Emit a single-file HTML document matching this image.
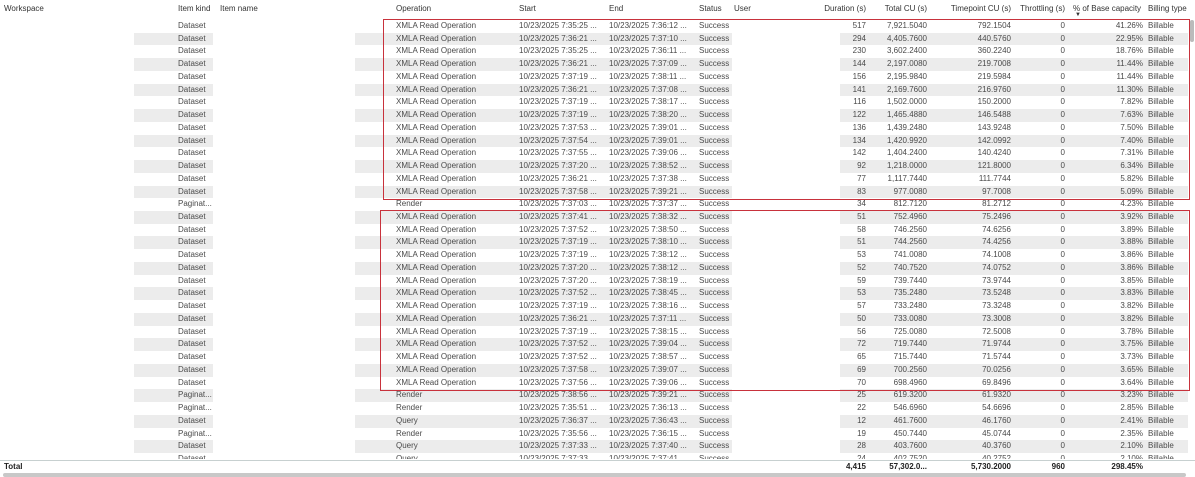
<!DOCTYPE html>
<html><head><meta charset="utf-8"><style>
body{margin:0;width:1195px;height:477px;overflow:hidden;background:#fff;font-family:"Liberation Sans",sans-serif;font-size:8px;color:#4a4a4a;position:relative}
.h{position:absolute;top:0;height:18px;line-height:18px;width:1195px;color:#333}
.h span,.r span{position:absolute;white-space:nowrap}
#body{position:absolute;top:20px;left:0;width:1195px;height:439px;overflow:hidden}
.r{position:relative;height:12.74px;line-height:12.74px}
.r.g:before{content:"";position:absolute;left:134px;width:79px;top:0;bottom:0;background:#ececec}
.r.g:after{content:"";position:absolute;left:355px;width:377px;top:0;bottom:0;background:#ececec;z-index:0}
.r.g i{position:absolute;left:840px;width:348px;top:0;bottom:0;background:#ececec}
.r span{z-index:1}
.k{left:178px}.op{left:396px}.s{left:519px}.e{left:609px}.st{left:699px}
.d{right:329px}.t{right:268px}.tp{right:184px}.th{right:130px}.p{right:52px}.b{left:1148px}
.box{position:absolute;border-width:1px;border-style:solid;border-color:#c8323c !important;z-index:5}
.tot{position:absolute;top:460px;left:0;width:1195px;height:12px;line-height:12px;border-top:1px solid #c7d0d0;font-weight:bold;color:#222}
.tot span{position:absolute}
</style></head><body>
<div class="h"><span style="left:4px">Workspace</span><span style="left:178px">Item kind</span><span style="left:220px">Item name</span><span style="left:396px">Operation</span><span style="left:519px">Start</span><span style="left:609px">End</span><span style="left:699px">Status</span><span style="left:734px">User</span><span style="right:329px">Duration (s)</span><span style="right:268px">Total CU (s)</span><span style="right:184px">Timepoint CU (s)</span><span style="right:130px">Throttling (s)</span><span style="left:1073px">% of Base capacity</span><span style="left:1075px;top:6px;font-size:6px">▼</span><span style="left:1148px">Billing type</span></div>
<div style="position:absolute;left:1190px;top:20px;width:4px;height:22px;background:#bbb;border-radius:2px"></div>
<div id="body">
<div class="r"><span class="k">Dataset</span><span class="op">XMLA Read Operation</span><span class="s">10/23/2025 7:35:25 ...</span><span class="e">10/23/2025 7:36:12 ...</span><span class="st">Success</span><span class="d">517</span><span class="t">7,921.5040</span><span class="tp">792.1504</span><span class="th">0</span><span class="p">41.26%</span><span class="b">Billable</span></div>
<div class="r g"><i></i><span class="k">Dataset</span><span class="op">XMLA Read Operation</span><span class="s">10/23/2025 7:36:21 ...</span><span class="e">10/23/2025 7:37:10 ...</span><span class="st">Success</span><span class="d">294</span><span class="t">4,405.7600</span><span class="tp">440.5760</span><span class="th">0</span><span class="p">22.95%</span><span class="b">Billable</span></div>
<div class="r"><span class="k">Dataset</span><span class="op">XMLA Read Operation</span><span class="s">10/23/2025 7:35:25 ...</span><span class="e">10/23/2025 7:36:11 ...</span><span class="st">Success</span><span class="d">230</span><span class="t">3,602.2400</span><span class="tp">360.2240</span><span class="th">0</span><span class="p">18.76%</span><span class="b">Billable</span></div>
<div class="r g"><i></i><span class="k">Dataset</span><span class="op">XMLA Read Operation</span><span class="s">10/23/2025 7:36:21 ...</span><span class="e">10/23/2025 7:37:09 ...</span><span class="st">Success</span><span class="d">144</span><span class="t">2,197.0080</span><span class="tp">219.7008</span><span class="th">0</span><span class="p">11.44%</span><span class="b">Billable</span></div>
<div class="r"><span class="k">Dataset</span><span class="op">XMLA Read Operation</span><span class="s">10/23/2025 7:37:19 ...</span><span class="e">10/23/2025 7:38:11 ...</span><span class="st">Success</span><span class="d">156</span><span class="t">2,195.9840</span><span class="tp">219.5984</span><span class="th">0</span><span class="p">11.44%</span><span class="b">Billable</span></div>
<div class="r g"><i></i><span class="k">Dataset</span><span class="op">XMLA Read Operation</span><span class="s">10/23/2025 7:36:21 ...</span><span class="e">10/23/2025 7:37:08 ...</span><span class="st">Success</span><span class="d">141</span><span class="t">2,169.7600</span><span class="tp">216.9760</span><span class="th">0</span><span class="p">11.30%</span><span class="b">Billable</span></div>
<div class="r"><span class="k">Dataset</span><span class="op">XMLA Read Operation</span><span class="s">10/23/2025 7:37:19 ...</span><span class="e">10/23/2025 7:38:17 ...</span><span class="st">Success</span><span class="d">116</span><span class="t">1,502.0000</span><span class="tp">150.2000</span><span class="th">0</span><span class="p">7.82%</span><span class="b">Billable</span></div>
<div class="r g"><i></i><span class="k">Dataset</span><span class="op">XMLA Read Operation</span><span class="s">10/23/2025 7:37:19 ...</span><span class="e">10/23/2025 7:38:20 ...</span><span class="st">Success</span><span class="d">122</span><span class="t">1,465.4880</span><span class="tp">146.5488</span><span class="th">0</span><span class="p">7.63%</span><span class="b">Billable</span></div>
<div class="r"><span class="k">Dataset</span><span class="op">XMLA Read Operation</span><span class="s">10/23/2025 7:37:53 ...</span><span class="e">10/23/2025 7:39:01 ...</span><span class="st">Success</span><span class="d">136</span><span class="t">1,439.2480</span><span class="tp">143.9248</span><span class="th">0</span><span class="p">7.50%</span><span class="b">Billable</span></div>
<div class="r g"><i></i><span class="k">Dataset</span><span class="op">XMLA Read Operation</span><span class="s">10/23/2025 7:37:54 ...</span><span class="e">10/23/2025 7:39:01 ...</span><span class="st">Success</span><span class="d">134</span><span class="t">1,420.9920</span><span class="tp">142.0992</span><span class="th">0</span><span class="p">7.40%</span><span class="b">Billable</span></div>
<div class="r"><span class="k">Dataset</span><span class="op">XMLA Read Operation</span><span class="s">10/23/2025 7:37:55 ...</span><span class="e">10/23/2025 7:39:06 ...</span><span class="st">Success</span><span class="d">142</span><span class="t">1,404.2400</span><span class="tp">140.4240</span><span class="th">0</span><span class="p">7.31%</span><span class="b">Billable</span></div>
<div class="r g"><i></i><span class="k">Dataset</span><span class="op">XMLA Read Operation</span><span class="s">10/23/2025 7:37:20 ...</span><span class="e">10/23/2025 7:38:52 ...</span><span class="st">Success</span><span class="d">92</span><span class="t">1,218.0000</span><span class="tp">121.8000</span><span class="th">0</span><span class="p">6.34%</span><span class="b">Billable</span></div>
<div class="r"><span class="k">Dataset</span><span class="op">XMLA Read Operation</span><span class="s">10/23/2025 7:36:21 ...</span><span class="e">10/23/2025 7:37:38 ...</span><span class="st">Success</span><span class="d">77</span><span class="t">1,117.7440</span><span class="tp">111.7744</span><span class="th">0</span><span class="p">5.82%</span><span class="b">Billable</span></div>
<div class="r g"><i></i><span class="k">Dataset</span><span class="op">XMLA Read Operation</span><span class="s">10/23/2025 7:37:58 ...</span><span class="e">10/23/2025 7:39:21 ...</span><span class="st">Success</span><span class="d">83</span><span class="t">977.0080</span><span class="tp">97.7008</span><span class="th">0</span><span class="p">5.09%</span><span class="b">Billable</span></div>
<div class="r"><span class="k">Paginat...</span><span class="op">Render</span><span class="s">10/23/2025 7:37:03 ...</span><span class="e">10/23/2025 7:37:37 ...</span><span class="st">Success</span><span class="d">34</span><span class="t">812.7120</span><span class="tp">81.2712</span><span class="th">0</span><span class="p">4.23%</span><span class="b">Billable</span></div>
<div class="r g"><i></i><span class="k">Dataset</span><span class="op">XMLA Read Operation</span><span class="s">10/23/2025 7:37:41 ...</span><span class="e">10/23/2025 7:38:32 ...</span><span class="st">Success</span><span class="d">51</span><span class="t">752.4960</span><span class="tp">75.2496</span><span class="th">0</span><span class="p">3.92%</span><span class="b">Billable</span></div>
<div class="r"><span class="k">Dataset</span><span class="op">XMLA Read Operation</span><span class="s">10/23/2025 7:37:52 ...</span><span class="e">10/23/2025 7:38:50 ...</span><span class="st">Success</span><span class="d">58</span><span class="t">746.2560</span><span class="tp">74.6256</span><span class="th">0</span><span class="p">3.89%</span><span class="b">Billable</span></div>
<div class="r g"><i></i><span class="k">Dataset</span><span class="op">XMLA Read Operation</span><span class="s">10/23/2025 7:37:19 ...</span><span class="e">10/23/2025 7:38:10 ...</span><span class="st">Success</span><span class="d">51</span><span class="t">744.2560</span><span class="tp">74.4256</span><span class="th">0</span><span class="p">3.88%</span><span class="b">Billable</span></div>
<div class="r"><span class="k">Dataset</span><span class="op">XMLA Read Operation</span><span class="s">10/23/2025 7:37:19 ...</span><span class="e">10/23/2025 7:38:12 ...</span><span class="st">Success</span><span class="d">53</span><span class="t">741.0080</span><span class="tp">74.1008</span><span class="th">0</span><span class="p">3.86%</span><span class="b">Billable</span></div>
<div class="r g"><i></i><span class="k">Dataset</span><span class="op">XMLA Read Operation</span><span class="s">10/23/2025 7:37:20 ...</span><span class="e">10/23/2025 7:38:12 ...</span><span class="st">Success</span><span class="d">52</span><span class="t">740.7520</span><span class="tp">74.0752</span><span class="th">0</span><span class="p">3.86%</span><span class="b">Billable</span></div>
<div class="r"><span class="k">Dataset</span><span class="op">XMLA Read Operation</span><span class="s">10/23/2025 7:37:20 ...</span><span class="e">10/23/2025 7:38:19 ...</span><span class="st">Success</span><span class="d">59</span><span class="t">739.7440</span><span class="tp">73.9744</span><span class="th">0</span><span class="p">3.85%</span><span class="b">Billable</span></div>
<div class="r g"><i></i><span class="k">Dataset</span><span class="op">XMLA Read Operation</span><span class="s">10/23/2025 7:37:52 ...</span><span class="e">10/23/2025 7:38:45 ...</span><span class="st">Success</span><span class="d">53</span><span class="t">735.2480</span><span class="tp">73.5248</span><span class="th">0</span><span class="p">3.83%</span><span class="b">Billable</span></div>
<div class="r"><span class="k">Dataset</span><span class="op">XMLA Read Operation</span><span class="s">10/23/2025 7:37:19 ...</span><span class="e">10/23/2025 7:38:16 ...</span><span class="st">Success</span><span class="d">57</span><span class="t">733.2480</span><span class="tp">73.3248</span><span class="th">0</span><span class="p">3.82%</span><span class="b">Billable</span></div>
<div class="r g"><i></i><span class="k">Dataset</span><span class="op">XMLA Read Operation</span><span class="s">10/23/2025 7:36:21 ...</span><span class="e">10/23/2025 7:37:11 ...</span><span class="st">Success</span><span class="d">50</span><span class="t">733.0080</span><span class="tp">73.3008</span><span class="th">0</span><span class="p">3.82%</span><span class="b">Billable</span></div>
<div class="r"><span class="k">Dataset</span><span class="op">XMLA Read Operation</span><span class="s">10/23/2025 7:37:19 ...</span><span class="e">10/23/2025 7:38:15 ...</span><span class="st">Success</span><span class="d">56</span><span class="t">725.0080</span><span class="tp">72.5008</span><span class="th">0</span><span class="p">3.78%</span><span class="b">Billable</span></div>
<div class="r g"><i></i><span class="k">Dataset</span><span class="op">XMLA Read Operation</span><span class="s">10/23/2025 7:37:52 ...</span><span class="e">10/23/2025 7:39:04 ...</span><span class="st">Success</span><span class="d">72</span><span class="t">719.7440</span><span class="tp">71.9744</span><span class="th">0</span><span class="p">3.75%</span><span class="b">Billable</span></div>
<div class="r"><span class="k">Dataset</span><span class="op">XMLA Read Operation</span><span class="s">10/23/2025 7:37:52 ...</span><span class="e">10/23/2025 7:38:57 ...</span><span class="st">Success</span><span class="d">65</span><span class="t">715.7440</span><span class="tp">71.5744</span><span class="th">0</span><span class="p">3.73%</span><span class="b">Billable</span></div>
<div class="r g"><i></i><span class="k">Dataset</span><span class="op">XMLA Read Operation</span><span class="s">10/23/2025 7:37:58 ...</span><span class="e">10/23/2025 7:39:07 ...</span><span class="st">Success</span><span class="d">69</span><span class="t">700.2560</span><span class="tp">70.0256</span><span class="th">0</span><span class="p">3.65%</span><span class="b">Billable</span></div>
<div class="r"><span class="k">Dataset</span><span class="op">XMLA Read Operation</span><span class="s">10/23/2025 7:37:56 ...</span><span class="e">10/23/2025 7:39:06 ...</span><span class="st">Success</span><span class="d">70</span><span class="t">698.4960</span><span class="tp">69.8496</span><span class="th">0</span><span class="p">3.64%</span><span class="b">Billable</span></div>
<div class="r g"><i></i><span class="k">Paginat...</span><span class="op">Render</span><span class="s">10/23/2025 7:38:56 ...</span><span class="e">10/23/2025 7:39:21 ...</span><span class="st">Success</span><span class="d">25</span><span class="t">619.3200</span><span class="tp">61.9320</span><span class="th">0</span><span class="p">3.23%</span><span class="b">Billable</span></div>
<div class="r"><span class="k">Paginat...</span><span class="op">Render</span><span class="s">10/23/2025 7:35:51 ...</span><span class="e">10/23/2025 7:36:13 ...</span><span class="st">Success</span><span class="d">22</span><span class="t">546.6960</span><span class="tp">54.6696</span><span class="th">0</span><span class="p">2.85%</span><span class="b">Billable</span></div>
<div class="r g"><i></i><span class="k">Dataset</span><span class="op">Query</span><span class="s">10/23/2025 7:36:37 ...</span><span class="e">10/23/2025 7:36:43 ...</span><span class="st">Success</span><span class="d">12</span><span class="t">461.7600</span><span class="tp">46.1760</span><span class="th">0</span><span class="p">2.41%</span><span class="b">Billable</span></div>
<div class="r"><span class="k">Paginat...</span><span class="op">Render</span><span class="s">10/23/2025 7:35:56 ...</span><span class="e">10/23/2025 7:36:15 ...</span><span class="st">Success</span><span class="d">19</span><span class="t">450.7440</span><span class="tp">45.0744</span><span class="th">0</span><span class="p">2.35%</span><span class="b">Billable</span></div>
<div class="r g"><i></i><span class="k">Dataset</span><span class="op">Query</span><span class="s">10/23/2025 7:37:33 ...</span><span class="e">10/23/2025 7:37:40 ...</span><span class="st">Success</span><span class="d">28</span><span class="t">403.7600</span><span class="tp">40.3760</span><span class="th">0</span><span class="p">2.10%</span><span class="b">Billable</span></div>
<div class="r"><span class="k">Dataset</span><span class="op">Query</span><span class="s">10/23/2025 7:37:33 ...</span><span class="e">10/23/2025 7:37:41 ...</span><span class="st">Success</span><span class="d">24</span><span class="t">402.7520</span><span class="tp">40.2752</span><span class="th">0</span><span class="p">2.10%</span><span class="b">Billable</span></div>
</div>
<div class="box" style="left:383px;top:19px;width:805px;height:179px"></div>
<div class="box" style="left:380px;top:210px;width:808px;height:179px"></div>
<div class="tot"><span style="left:4px">Total</span><span style="right:329px">4,415</span><span style="right:268px">57,302.0...</span><span style="right:184px">5,730.2000</span><span style="right:130px">960</span><span style="right:52px">298.45%</span></div>
<div style="position:absolute;left:3px;top:473px;width:1183px;height:4px;background:#c8c8c8;border-radius:2px"></div>
</body></html>
